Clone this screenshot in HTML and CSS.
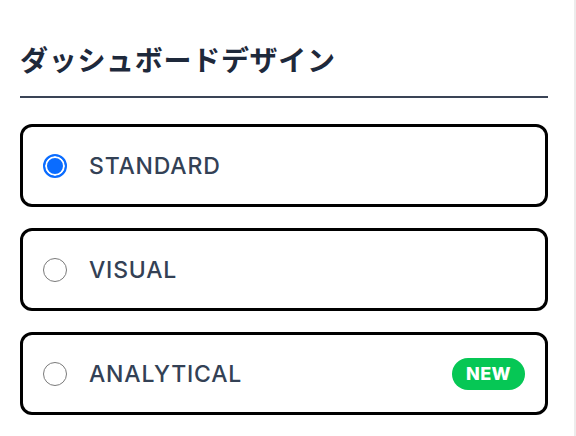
FILE: index.html
```html
<!DOCTYPE html>
<html lang="ja">
<head>
<meta charset="utf-8">
<link rel="stylesheet" href="styles.css">
</head>
<body>
<div class="panel">
  <h2 class="title">ダッシュボードデザイン</h2>
  <div class="options">
    <label class="option">
      <span class="radio checked"></span>
      <span class="label">STANDARD</span>
    </label>
    <label class="option">
      <span class="radio"></span>
      <span class="label">VISUAL</span>
    </label>
    <label class="option">
      <span class="radio"></span>
      <span class="label">ANALYTICAL</span>
      <span class="badge">NEW</span>
    </label>
  </div>
</div>
</body>
</html>
```

FILE: styles.css
```css
html, body {
  margin: 0;
  padding: 0;
  background: #ffffff;
}

.panel {
  box-sizing: border-box;
  width: 576px;
  height: 436px;
  padding: 42px 26px 0 20px;
  border-right: 2px solid #ececec;
  font-family: Inter, "Noto Sans", sans-serif;
}

.title {
  margin: 0;
  padding-bottom: 20px;
  border-bottom: 2px solid #3a4456;
  font-family: "Noto Sans CJK JP", sans-serif;
  font-size: 28px;
  font-weight: 700;
  line-height: 34px;
  letter-spacing: 0.7px;
  color: #1e293b;
}

.options {
  display: flex;
  flex-direction: column;
  gap: 21px;
  margin-top: 26px;
}

.option {
  box-sizing: border-box;
  height: 83px;
  display: flex;
  align-items: center;
  padding: 0 20px;
  border: 3px solid #000000;
  border-radius: 12px;
}

.radio {
  box-sizing: border-box;
  flex: none;
  width: 24px;
  height: 24px;
  border-radius: 50%;
  border: 1.5px solid #7a7a7a;
  background: #ffffff;
}

.radio.checked {
  border: 2px solid #0a6cff;
  background: #0a6cff;
  box-shadow: inset 0 0 0 2px #ffffff;
}

.label {
  margin-left: 22px;
  font-size: 23px;
  font-weight: 500;
  color: #334155;
  letter-spacing: 0.8px;
}

.badge {
  margin-left: auto;
  width: 73px;
  height: 32px;
  border-radius: 16px;
  background: #06c755;
  color: #ffffff;
  font-size: 18px;
  font-weight: 800;
  display: flex;
  align-items: center;
  justify-content: center;
  letter-spacing: 0.4px;
}
```
